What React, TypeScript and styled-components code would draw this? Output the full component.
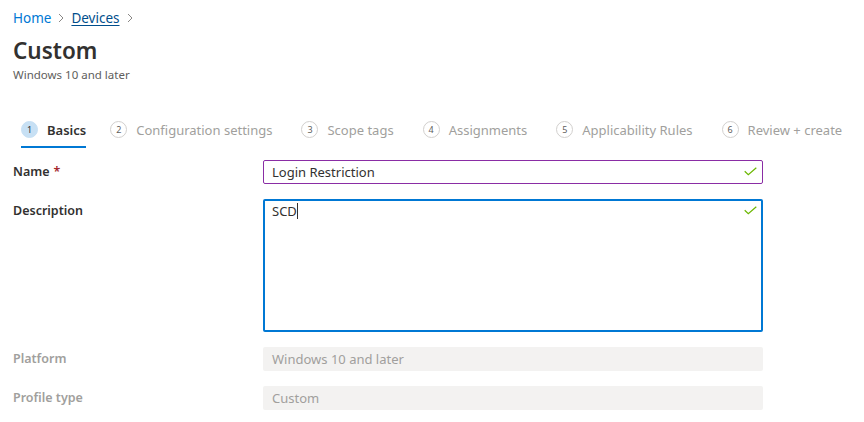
import React from "react";
import styled, { createGlobalStyle } from "styled-components";

const Global = createGlobalStyle`
  html, body { margin: 0; padding: 0; background: #fff; }
  body { font-family: "Noto Sans", "Open Sans", sans-serif; color: #323130; }
`;

const Page = styled.div`
  width: 864px;
  height: 422px;
  overflow: hidden;
  padding: 8px 0 0 13px;
  box-sizing: border-box;
`;

const Crumbs = styled.nav`
  display: flex;
  align-items: center;
  gap: 6px;
  height: 20px;
  font-size: 13.5px;
`;

const CrumbLink = styled.span<{ $current?: boolean }>`
  color: ${(p) => (p.$current ? "#004e8c" : "#0078d4")};
  text-decoration: ${(p) => (p.$current ? "underline" : "none")};
  text-underline-offset: 2px;
`;

const Chevron = () => (
  <svg width="8" height="10" viewBox="0 0 8 10">
    <polyline points="2,1 6,5 2,9" fill="none" stroke="#8a8886" strokeWidth="1" />
  </svg>
);

const Title = styled.h1`
  margin: 7px 0 0;
  font-size: 22.5px;
  font-weight: 600;
  line-height: 32px;
  color: #323130;
`;

const Subtitle = styled.div`
  font-size: 11.5px;
  line-height: 16px;
  color: #605e5c;
`;

const Steps = styled.div`
  display: flex;
  margin: 32px 0 0 8px;
  gap: 29px;
  white-space: nowrap;
`;

const Step = styled.div<{ $active?: boolean }>`
  display: flex;
  align-items: center;
  gap: 9px;
  height: 33px;
  padding-bottom: 2px;
  margin-right: ${(p) => (p.$active ? "-5px" : "0")};
  border-bottom: 2px solid ${(p) => (p.$active ? "#0078d4" : "transparent")};
  font-size: 13px;
  color: ${(p) => (p.$active ? "#323130" : "#a19f9d")};
  font-weight: ${(p) => (p.$active ? 600 : 400)};
  box-sizing: border-box;
`;

const StepNum = styled.span<{ $active?: boolean }>`
  width: 17px;
  height: 17px;
  border-radius: 50%;
  box-sizing: border-box;
  border: 1px solid ${(p) => (p.$active ? "#c7e0f4" : "#d2d0ce")};
  background: ${(p) => (p.$active ? "#c7e0f4" : "#fff")};
  color: ${(p) => (p.$active ? "#323130" : "#605e5c")};
  font-size: 9px;
  font-weight: 400;
  display: flex;
  align-items: center;
  justify-content: center;
`;

const Form = styled.div`
  display: grid;
  grid-template-columns: 250px 500px;
  row-gap: 15px;
  margin-top: 12px;
`;

const Label = styled.div<{ $disabled?: boolean }>`
  font-size: 12.5px;
  font-weight: 600;
  line-height: 24px;
  color: ${(p) => (p.$disabled ? "#a19f9d" : "#323130")};
`;

const Req = styled.span`
  color: #a4262c;
  margin-left: 4px;
`;

const Field = styled.div<{ $tall?: boolean; $focus?: boolean; $disabled?: boolean }>`
  position: relative;
  box-sizing: border-box;
  height: ${(p) => (p.$tall ? "133px" : "24px")};
  border: ${(p) =>
    p.$disabled ? "none" : p.$focus ? "2px solid #0078d4" : "1px solid #8a2da5"};
  border-radius: 2px;
  background: ${(p) => (p.$disabled ? "#f3f2f1" : "#fff")};
  color: ${(p) => (p.$disabled ? "#a19f9d" : "#323130")};
  font-size: 13px;
  line-height: ${(p) => (p.$focus ? "20px" : "22px")};
  padding: ${(p) => (p.$focus ? "0 7px" : p.$disabled ? "1px 9px" : "0 8px")};
  display: flex;
  align-items: flex-start;
`;

const Caret = styled.span`
  display: inline-block;
  width: 1px;
  height: 16px;
  background: #323130;
  margin-top: 2px;
`;

const Check = styled.svg<{ $focus?: boolean }>`
  position: absolute;
  right: ${(p) => (p.$focus ? "4px" : "5px")};
  top: ${(p) => (p.$focus ? "5px" : "6px")};
`;

const CheckIcon = ({ focus }: { focus?: boolean }) => (
  <Check $focus={focus} width="13" height="9" viewBox="0 0 13 9">
    <polyline points="0.7,4.3 4.3,7.8 12.3,0.7" fill="none" stroke="#6bb700" strokeWidth="1.2" />
  </Check>
);

const steps = [
  "Basics",
  "Configuration settings",
  "Scope tags",
  "Assignments",
  "Applicability Rules",
  "Review + create",
];

export default function App() {
  return (
    <>
      <Global />
      <Page>
        <Crumbs>
          <CrumbLink>Home</CrumbLink>
          <Chevron />
          <CrumbLink $current>Devices</CrumbLink>
          <Chevron />
        </Crumbs>
        <Title>Custom</Title>
        <Subtitle>Windows 10 and later</Subtitle>
        <Steps>
          {steps.map((s, i) => (
            <Step key={s} $active={i === 0}>
              <StepNum $active={i === 0}>{i + 1}</StepNum>
              {s}
            </Step>
          ))}
        </Steps>
        <Form>
          <Label>
            Name<Req>*</Req>
          </Label>
          <Field>
            Login Restriction
            <CheckIcon />
          </Field>
          <Label>Description</Label>
          <Field $tall $focus>
            SCD
            <Caret />
            <CheckIcon focus />
          </Field>
          <Label $disabled>Platform</Label>
          <Field $disabled>Windows 10 and later</Field>
          <Label $disabled>Profile type</Label>
          <Field $disabled>Custom</Field>
        </Form>
      </Page>
    </>
  );
}
